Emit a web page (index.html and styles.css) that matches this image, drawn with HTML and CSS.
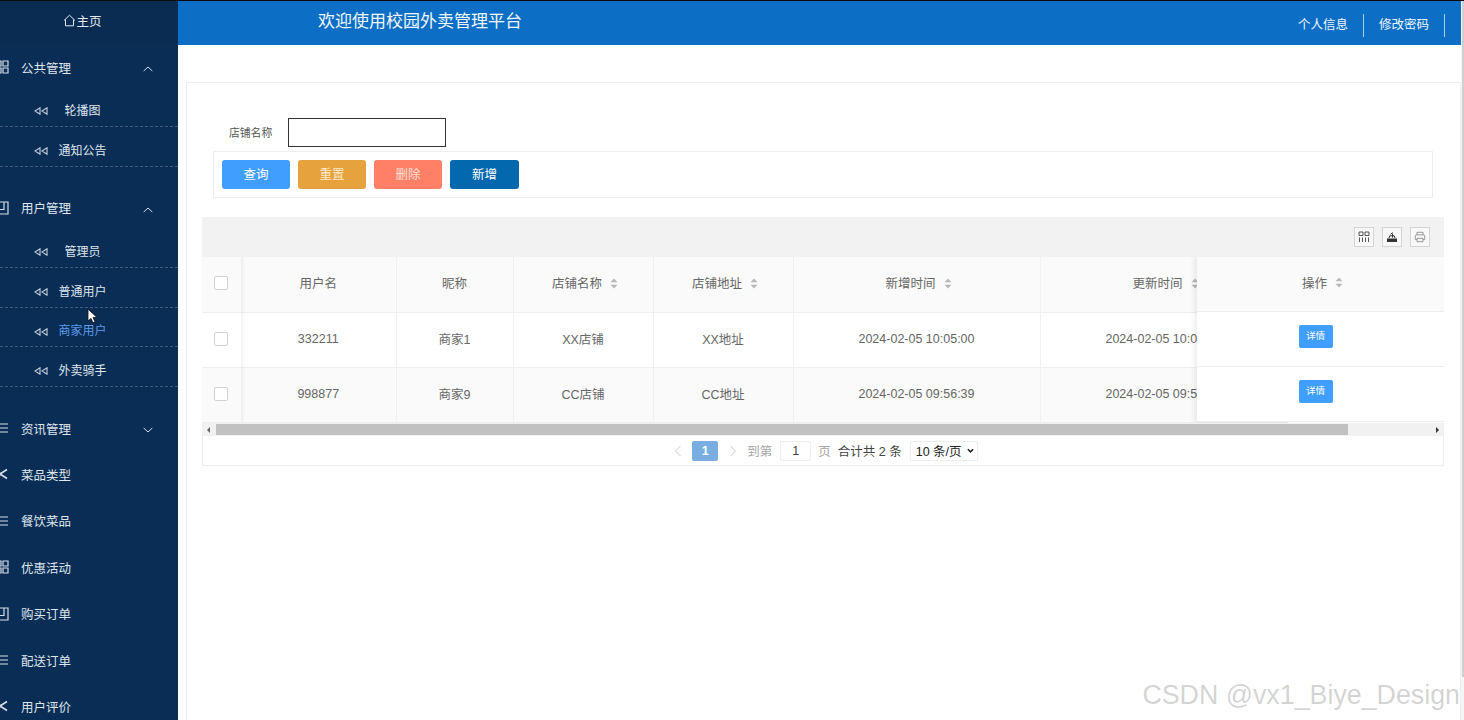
FILE: index.html
```html
<!DOCTYPE html>
<html lang="zh">
<head>
<meta charset="utf-8">
<title>校园外卖管理平台</title>
<link rel="stylesheet" href="styles.css">
</head>
<body>
<svg class="defs" width="0" height="0" aria-hidden="true">
  <symbol id="i-grid" viewBox="0 0 14 14"><path d="M1 1h5v5H1zM8 1h5v5H8zM1 8h5v5H1zM8 8h5v5H8z" fill="none" stroke="currentColor" stroke-width="1.2"/></symbol>
  <symbol id="i-doc" viewBox="0 0 14 14"><path d="M0 1h13v12H0M9 1v7.500H0" fill="none" stroke="currentColor" stroke-width="1.200"/></symbol>
  <symbol id="i-menu" viewBox="0 0 14 14"><path d="M1 3h12M1 7h12M1 11h12" fill="none" stroke="currentColor" stroke-width="1.200"/></symbol>
  <symbol id="i-share" viewBox="0 0 14 14"><path d="M12 2.500 5 7l7 4.500" fill="none" stroke="currentColor" stroke-width="1.700"/><circle cx="5" cy="7" r="1.500" fill="currentColor"/></symbol>
  <symbol id="i-back" viewBox="0 0 14 8"><path d="M6 .8v6.400L1 4zM13 .8v6.400L8 4z" fill="none" stroke="currentColor" stroke-width="1.100"/></symbol>
  <symbol id="i-up" viewBox="0 0 10 6"><path d="M.7 5 5 1l4.300 4" fill="none" stroke="currentColor" stroke-width="1"/></symbol>
  <symbol id="i-down" viewBox="0 0 10 6"><path d="M.7 1 5 5l4.300-4" fill="none" stroke="currentColor" stroke-width="1"/></symbol>
  <symbol id="i-home" viewBox="0 0 13 13"><path d="M1 6.500 6.500 1.200 12 6.500M2.500 5.500v6.300h8V5.500" fill="none" stroke="currentColor" stroke-width="1"/></symbol>
  <symbol id="i-sort" viewBox="0 0 8 11"><path d="M4 .5 7.500 4.300h-7zM4 10.500.5 6.700h7z" fill="currentColor"/></symbol>
</svg>

<div class="app">
  <aside class="side">
    <div class="home"><svg class="home-ic"><use href="#i-home"/></svg>主页</div>

    <div class="group"><svg class="g-ic"><use href="#i-grid"/></svg><span class="g-name">公共管理</span><svg class="caret"><use href="#i-up"/></svg></div>
    <ul class="subs">
      <li class="sub"><svg class="s-ic"><use href="#i-back"/></svg><span class="s-name">轮播图</span></li>
      <li class="sub"><svg class="s-ic"><use href="#i-back"/></svg><span class="s-name">通知公告</span></li>
    </ul>

    <div class="group"><svg class="g-ic"><use href="#i-doc"/></svg><span class="g-name">用户管理</span><svg class="caret"><use href="#i-up"/></svg></div>
    <ul class="subs">
      <li class="sub"><svg class="s-ic"><use href="#i-back"/></svg><span class="s-name">管理员</span></li>
      <li class="sub"><svg class="s-ic"><use href="#i-back"/></svg><span class="s-name">普通用户</span></li>
      <li class="sub active"><svg class="s-ic"><use href="#i-back"/></svg><span class="s-name">商家用户</span></li>
      <li class="sub"><svg class="s-ic"><use href="#i-back"/></svg><span class="s-name">外卖骑手</span></li>
    </ul>

    <div class="group"><svg class="g-ic"><use href="#i-menu"/></svg><span class="g-name">资讯管理</span><svg class="caret"><use href="#i-down"/></svg></div>
    <div class="group"><svg class="g-ic"><use href="#i-share"/></svg><span class="g-name">菜品类型</span></div>
    <div class="group"><svg class="g-ic"><use href="#i-menu"/></svg><span class="g-name">餐饮菜品</span></div>
    <div class="group"><svg class="g-ic"><use href="#i-grid"/></svg><span class="g-name">优惠活动</span></div>
    <div class="group"><svg class="g-ic"><use href="#i-doc"/></svg><span class="g-name">购买订单</span></div>
    <div class="group"><svg class="g-ic"><use href="#i-menu"/></svg><span class="g-name">配送订单</span></div>
    <div class="group"><svg class="g-ic"><use href="#i-share"/></svg><span class="g-name">用户评价</span></div>
  </aside>

  <div class="main">
    <header class="top">
      <h1 class="title">欢迎使用校园外卖管理平台</h1>
      <nav class="top-nav"><a class="top-link">个人信息</a><a class="top-link">修改密码</a></nav>
    </header>

    <section class="panel">
      <div class="search">
        <label class="search-label">店铺名称</label>
        <div class="search-input"></div>
      </div>
      <div class="actions">
        <button class="btn b-blue">查询</button>
        <button class="btn b-orange">重置</button>
        <button class="btn b-red">删除</button>
        <button class="btn b-navy">新增</button>
      </div>

      <div class="toolbar">
        <span class="tool"><svg viewBox="0 0 12 12"><path d="M1 1h4v3.500H1zM7 1h4v3.500H7zM1.500 6.500V11M4.500 6.500V11M7.500 6.500V11M10.500 6.500V11" fill="none" stroke="#444" stroke-width=".9"/></svg></span>
        <span class="tool"><svg viewBox="0 0 12 12"><path d="M1 7.500h10V11H1z" fill="#333"/><path d="M6.500 6.500V2.500M4.500 3.500 6.500 1.500M3 7l.8-2.200h4.400L9 7" fill="none" stroke="#333" stroke-width="1"/></svg></span>
        <span class="tool"><svg viewBox="0 0 14 14"><path d="M3.500 4.500V1.500h7v3M3.500 10H1.500V6a1.500 1.500 0 0 1 1.500-1.500h8A1.500 1.500 0 0 1 12.500 6v4h-2M3.500 8.500h7v4h-7z" fill="none" stroke="#888" stroke-width="1"/></svg></span>
      </div>

      <div class="grid-wrap">
        <div class="clip">
          <table class="grid">
            <colgroup><col class="c0"><col class="c1"><col class="c2"><col class="c3"><col class="c3"><col class="c4"><col class="c4"></colgroup>
            <thead>
              <tr>
                <th class="chk-cell"><span class="chk"></span></th>
                <th>用户名</th>
                <th>昵称</th>
                <th>店铺名称<svg class="sort sort-in"><use href="#i-sort"/></svg></th>
                <th>店铺地址<svg class="sort sort-in"><use href="#i-sort"/></svg></th>
                <th>新增时间<svg class="sort sort-in"><use href="#i-sort"/></svg></th>
                <th>更新时间<svg class="sort sort-in"><use href="#i-sort"/></svg></th>
              </tr>
            </thead>
            <tbody>
              <tr>
                <td class="chk-cell"><span class="chk"></span></td>
                <td>332211</td><td>商家1</td><td>XX店铺</td><td>XX地址</td>
                <td>2024-02-05 10:05:00</td><td>2024-02-05 10:05:00</td>
              </tr>
              <tr>
                <td class="chk-cell"><span class="chk"></span></td>
                <td>998877</td><td>商家9</td><td>CC店铺</td><td>CC地址</td>
                <td>2024-02-05 09:56:39</td><td>2024-02-05 09:56:39</td>
              </tr>
            </tbody>
          </table>
          <div class="fixed-left" aria-hidden="true"></div>
          <div class="fixed-right">
            <div class="fr-head">操作<svg class="sort sort-in"><use href="#i-sort"/></svg></div>
            <div class="fr-cell"><button class="mini">详情</button></div>
            <div class="fr-cell"><button class="mini">详情</button></div>
          </div>
        </div>
        <div class="hbar">
          <span class="arrow al"></span>
          <span class="thumb"></span>
          <span class="arrow ar"></span>
        </div>
        <div class="pager">
          <svg class="pg-arrow" viewBox="0 0 8 12"><path d="M6.500 1 1.500 6l5 5" fill="none" stroke="#c8c8c8" stroke-width="1"/></svg>
          <span class="pg-cur">1</span>
          <svg class="pg-arrow pg-next" viewBox="0 0 8 12"><path d="M1.500 1l5 5-5 5" fill="none" stroke="#c8c8c8" stroke-width="1"/></svg>
          <span class="pg-muted">到第</span>
          <span class="pg-input">1</span>
          <span class="pg-muted">页</span>
          <span class="pg-total">合计共 2 条</span>
          <span class="pg-select">10 条/页<svg class="pg-caret" viewBox="0 0 8 6"><path d="M1 1l3 3 3-3" fill="none" stroke="#222" stroke-width="1.800"/></svg></span>
        </div>
      </div>
    </section>
  </div>
</div>

<div class="vbar"><span class="vthumb"></span></div>
<svg class="cursor" viewBox="0 0 11 16"><path d="M1 1v12l3-2.600 2 4.400 2-1-2-4.200h4z" fill="#fff" stroke="#111" stroke-width=".8"/></svg>
<div class="watermark">CSDN @vx1_Biye_Design</div>
</body>
</html>
```
FILE: styles.css
```css
* { box-sizing: border-box; }
html, body { margin: 0; height: 100%; overflow: hidden; }
body {
  position: relative;
  background: #fff;
  font-family: "Liberation Sans", "Noto Sans CJK SC", sans-serif;
  color: #606266;
}
.defs { position: absolute; }
.app { display: flex; height: 720px; border-top: 1px solid #0c0c0c; }

/* sidebar */
.side {
  flex: 0 0 178px;
  height: 719px;
  overflow: hidden;
  background: #0a2d56;
  color: #dfe6ee;
  font-size: 12.5px;
}
.home {
  display: flex;
  align-items: center;
  justify-content: center;
  height: 44px;
  padding: 0 13px 5px 0;
  background: #0a2b52;
  color: #e4eaf2;
}
.home-ic { width: 13px; height: 13px; }
.group {
  display: flex;
  align-items: center;
  height: 46.4px;
  padding: 0 25px 2px 0;
}
.g-ic { flex: none; width: 14px; height: 14px; margin-left: -5px; color: #d5dde7; }
.g-name { margin-left: 12px; flex: 1; }
.caret { flex: none; width: 10px; height: 6px; margin-top: 4px; color: #d5dde7; }
.subs { list-style: none; margin: -4px 0 19px; padding: 0; }
.sub {
  display: flex;
  align-items: center;
  justify-content: center;
  position: relative;
  height: 39.7px;
  padding-top: 6px;
  border-bottom: 1px dashed #3f5a7b;
  font-size: 12px;
}
.s-ic { position: absolute; left: 34px; top: 20px; width: 14px; height: 8px; color: #c6d0dc; }
.s-name { margin-left: -13px; }
.sub.active { color: #5e9be8; }

/* header */
.main { flex: 1; min-width: 0; padding-right: 3px; background: #fff; }
.top {
  display: flex;
  align-items: center;
  justify-content: space-between;
  height: 44px;
  background: #0c6fc5;
  color: #fff;
}
.title { margin: -7px 0 0 140px; font-size: 17px; font-weight: 400; color: #f2f7fc; }
.top-nav { display: flex; margin-top: 5px; padding-right: 16px; }
.top-link {
  display: block;
  height: 23px;
  line-height: 23px;
  padding: 0 15px;
  border-right: 1px solid #a9cdeb;
  font-size: 12.5px;
  color: #eef5fb;
}

/* panel */
.panel {
  height: 640px;
  margin: 37px 0 0 8px;
  padding: 35px 16px 0 15px;
  border: 1px solid #eee;
  border-bottom: 0;
}
.search { display: flex; align-items: center; height: 29px; padding-left: 27px; }
.search-label { width: 59px; margin-bottom: 2px; font-size: 10.8px; color: #555; }
.search-input { width: 158px; height: 29px; border: 1px solid #333; background: #fff; }
.actions {
  display: flex;
  align-items: center;
  gap: 8px;
  height: 47px;
  margin: 4px 11px 0 11px;
  padding-left: 8px;
  border: 1px solid #eee;
}
.btn {
  width: 68px;
  height: 29px;
  border: 0;
  border-radius: 3px;
  padding: 0 0 2px;
  font: inherit;
  font-size: 12.5px;
  color: #fff;
}
.b-blue { background: #409eff; }
.b-orange { background: #e6a23c; color: #fbe9c9; }
.b-red { background: #ff8066; color: #fbe0da; }
.b-navy { width: 69px; background: #0368ae; }

.toolbar {
  display: flex;
  align-items: center;
  justify-content: flex-end;
  gap: 8px;
  height: 40px;
  margin-top: 19px;
  padding-right: 14px;
  background: #f2f2f2;
}
.tool {
  display: flex;
  align-items: center;
  justify-content: center;
  width: 20px;
  height: 20px;
  border: 1px solid #d4d4d4;
  background: #f8f8f8;
}
.tool svg { width: 12px; height: 12px; }

/* table */
.clip { position: relative; width: 1242px; height: 166px; overflow: hidden; }
.grid { table-layout: fixed; width: 1085px; border-collapse: collapse; font-size: 12.5px; color: #666; }
.grid th, .grid td { text-align: center; font-weight: 400; border-right: 1px solid #f0f0f0; border-bottom: 1px solid #eee; white-space: nowrap; }
.grid th { height: 55px; padding: 0 0 3px; background: #fafafa; }
.grid td { height: 55px; padding: 0 0 2px; background: #fff; }
.grid .chk-cell { border-right: 0; padding-right: 2px; }
.grid tbody tr:nth-child(2) td { background: #fafafa; }
.c0 { width: 39px; }
.c1 { width: 155px; }
.c2 { width: 117px; }
.c3 { width: 140px; }
.c4 { width: 247px; }
.chk { display: inline-block; width: 14px; height: 14px; vertical-align: middle; border: 1px solid #d2d2d2; border-radius: 2px; background: #fff; }
.sort { width: 8px; height: 11px; margin-left: 8px; vertical-align: -1px; color: #b8b8b8; }
.sort-in { margin-right: -4px; }
.fixed-left {
  position: absolute;
  left: 39px;
  top: 0;
  width: 4px;
  height: 165px;
  background: linear-gradient(90deg, rgba(0,0,0,.05), rgba(0,0,0,0));
}
.fixed-right {
  position: absolute;
  right: 0;
  top: 0;
  width: 247px;
  background: #fff;
  box-shadow: -3px 0 5px rgba(0,0,0,.07);
  font-size: 12.5px;
  color: #666;
}
.fr-head, .fr-cell {
  display: flex;
  align-items: center;
  justify-content: center;
  height: 55px;
  border-bottom: 1px solid #eee;
}
.fr-head { background: #fafafa; padding-bottom: 3px; }
.fr-cell { padding: 0 10px 6px 0; }
.mini {
  width: 34px;
  height: 23px;
  border: 0;
  border-radius: 2px;
  padding: 0 0 2px;
  background: #409eff;
  color: #fff;
  font: inherit;
  font-size: 9.5px;
}

/* horizontal scrollbar */
.hbar {
  display: flex;
  align-items: center;
  justify-content: space-between;
  width: 1242px;
  height: 13px;
  background: #f1f1f1;
}
.thumb { flex: none; width: 1132px; height: 11px; margin-left: 6px; margin-right: auto; background: #c1c1c1; }
.arrow { flex: none; width: 0; height: 0; border-top: 3px solid transparent; border-bottom: 3px solid transparent; }
.al { margin-left: 5px; border-right: 3px solid #666; }
.ar { margin-right: 5px; border-left: 3px solid #333; }

/* pager */
.pager {
  display: flex;
  align-items: center;
  justify-content: center;
  width: 1242px;
  height: 30px;
  padding-left: 6px;
  border: 1px solid #eee;
  border-top: 0;
  font-size: 12.5px;
}
.pg-arrow { width: 8px; height: 12px; }
.pg-cur {
  width: 26px;
  height: 20px;
  margin: 0 11px 0 10px;
  line-height: 20px;
  text-align: center;
  border-radius: 2px;
  background: #7aaee3;
  color: #fff;
  font-weight: 700;
}
.pg-next { margin-right: 10px; }
.pg-muted { color: #a5a5a5; }
.pg-input {
  width: 31px;
  height: 20px;
  margin: 0 7px 0 8px;
  line-height: 18px;
  text-align: center;
  border: 1px solid #eee;
  border-radius: 2px;
  color: #444;
}
.pg-total { margin-left: 7px; color: #444; }
.pg-select {
  display: flex;
  align-items: center;
  justify-content: space-between;
  width: 68px;
  height: 20px;
  margin-left: 8px;
  padding: 0 3px 0 5px;
  border: 1px solid #eee;
  border-radius: 2px;
  color: #222;
  white-space: nowrap;
}
.pg-caret { width: 7px; height: 6px; flex: none; }

/* overlays */
.vbar { position: absolute; right: 0; top: 1px; bottom: 0; width: 3px; background: #f5f5f5; }
.vthumb { display: block; height: 676px; margin-left: .5px; background: #cfcfcf; }
.cursor { position: absolute; left: 87px; top: 308px; width: 11px; height: 16px; }
.watermark {
  position: absolute;
  right: 4px;
  bottom: 8px;
  font-family: "Liberation Sans", sans-serif;
  font-size: 26.8px;
  line-height: 34px;
  color: rgba(120,120,120,.32);
  white-space: nowrap;
  text-shadow: 0 1px 1px rgba(255,255,255,.5);
}
```
